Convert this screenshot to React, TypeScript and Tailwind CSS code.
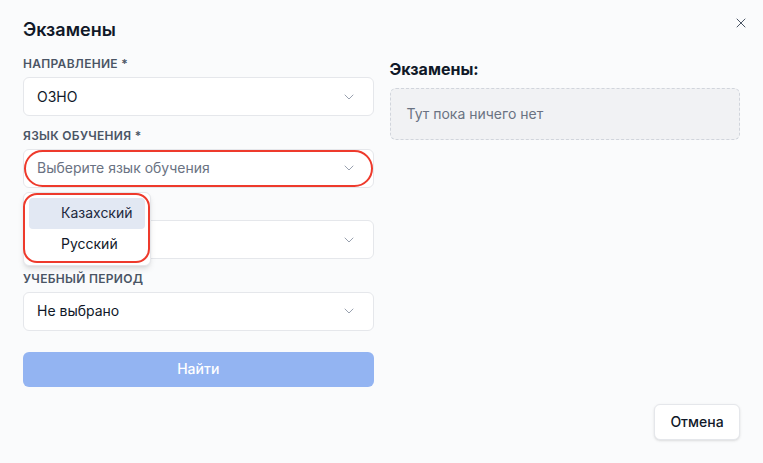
import { ChevronDown, X } from "lucide-react";

type Field = {
  label: string;
  value?: string;
  placeholder?: string;
};

const fields: Field[] = [
  { label: "Направление *", value: "ОЗНО" },
  { label: "Язык обучения *", placeholder: "Выберите язык обучения" },
  { label: "Курс", value: "1" },
  { label: "Учебный период", value: "Не выбрано" },
];

const languages = ["Казахский", "Русский"];

function SelectBox({ field }: { field: Field }) {
  return (
    <div className="flex h-[39px] items-center justify-between rounded-md border border-gray-200 bg-white pl-[13px] pr-[16px]">
      <span
        className={
          field.value ? "text-sm text-gray-900" : "text-sm text-gray-500"
        }
      >
        {field.value ?? field.placeholder}
      </span>
      <ChevronDown className="size-4 text-gray-400" strokeWidth={1.5} />
    </div>
  );
}

function LanguageMenu() {
  return (
    <div className="absolute left-0 top-[43px] z-10 w-[128px] rounded-md border border-gray-200 bg-white p-[5px] shadow-md">
      {languages.map((lang, i) => (
        <div
          key={lang}
          className={
            i === 0
              ? "flex h-[31px] items-center rounded bg-[#e2e8f3] pl-[32px] text-sm text-slate-800"
              : "flex h-[31px] items-center rounded pl-[32px] text-sm text-gray-900"
          }
        >
          {lang}
        </div>
      ))}
      {/* red marker round the open list */}
      <div className="pointer-events-none absolute left-[-1px] top-0 h-[70px] w-[127px] rounded-[14px] border-2 border-[#ee3a2c]" />
    </div>
  );
}

export default function App() {
  return (
    <div
      className="relative flex h-[463px] w-[763px] flex-col bg-[#fafbfc] px-[23px] pb-[23px] pt-[16px] text-gray-900"
      style={{ fontFamily: "Inter, 'Noto Sans', sans-serif" }}
    >
      <button
        type="button"
        className="absolute right-[14px] top-[15px] inline-flex size-4 items-center justify-center text-gray-600"
        aria-label="Close"
      >
        <X className="size-4" strokeWidth={1.5} />
      </button>

      <h2 className="text-lg font-semibold leading-7">Экзамены</h2>

      <div className="mt-[12px] grid grid-cols-2 gap-x-4">
        <div className="flex flex-col">
          <div className="flex flex-col gap-[11.5px]">
            {fields.map((field, i) => (
              <div key={field.label} className="relative flex flex-col gap-[5px]">
                <label className="text-xs font-semibold uppercase leading-4 tracking-wide text-gray-600">
                  {field.label}
                </label>
                <div className="relative">
                  <SelectBox field={field} />
                  {i === 1 ? (
                    <>
                      <div className="pointer-events-none absolute inset-x-[1px] inset-y-[1px] rounded-[19px] border-2 border-[#ee3a2c]" />
                      <LanguageMenu />
                    </>
                  ) : null}
                </div>
              </div>
            ))}
          </div>

          <button
            type="button"
            disabled
            className="mt-[21px] h-[35px] rounded-md bg-[#93b4f2] text-sm font-medium text-white"
          >
            Найти
          </button>
        </div>

        <div className="flex flex-col pt-[1px]">
          <h3 className="text-base font-bold leading-6">Экзамены:</h3>
          <div className="mt-[7px] flex h-[52px] items-center rounded-md border border-dashed border-gray-300 bg-[#f1f2f4] px-4 text-sm text-gray-500">
            Тут пока ничего нет
          </div>
        </div>
      </div>

      <div className="mt-auto flex justify-end">
        <button
          type="button"
          className="h-9 w-[86px] rounded-md border border-gray-200 bg-white text-sm font-medium text-gray-900 shadow-sm"
        >
          Отмена
        </button>
      </div>
    </div>
  );
}
